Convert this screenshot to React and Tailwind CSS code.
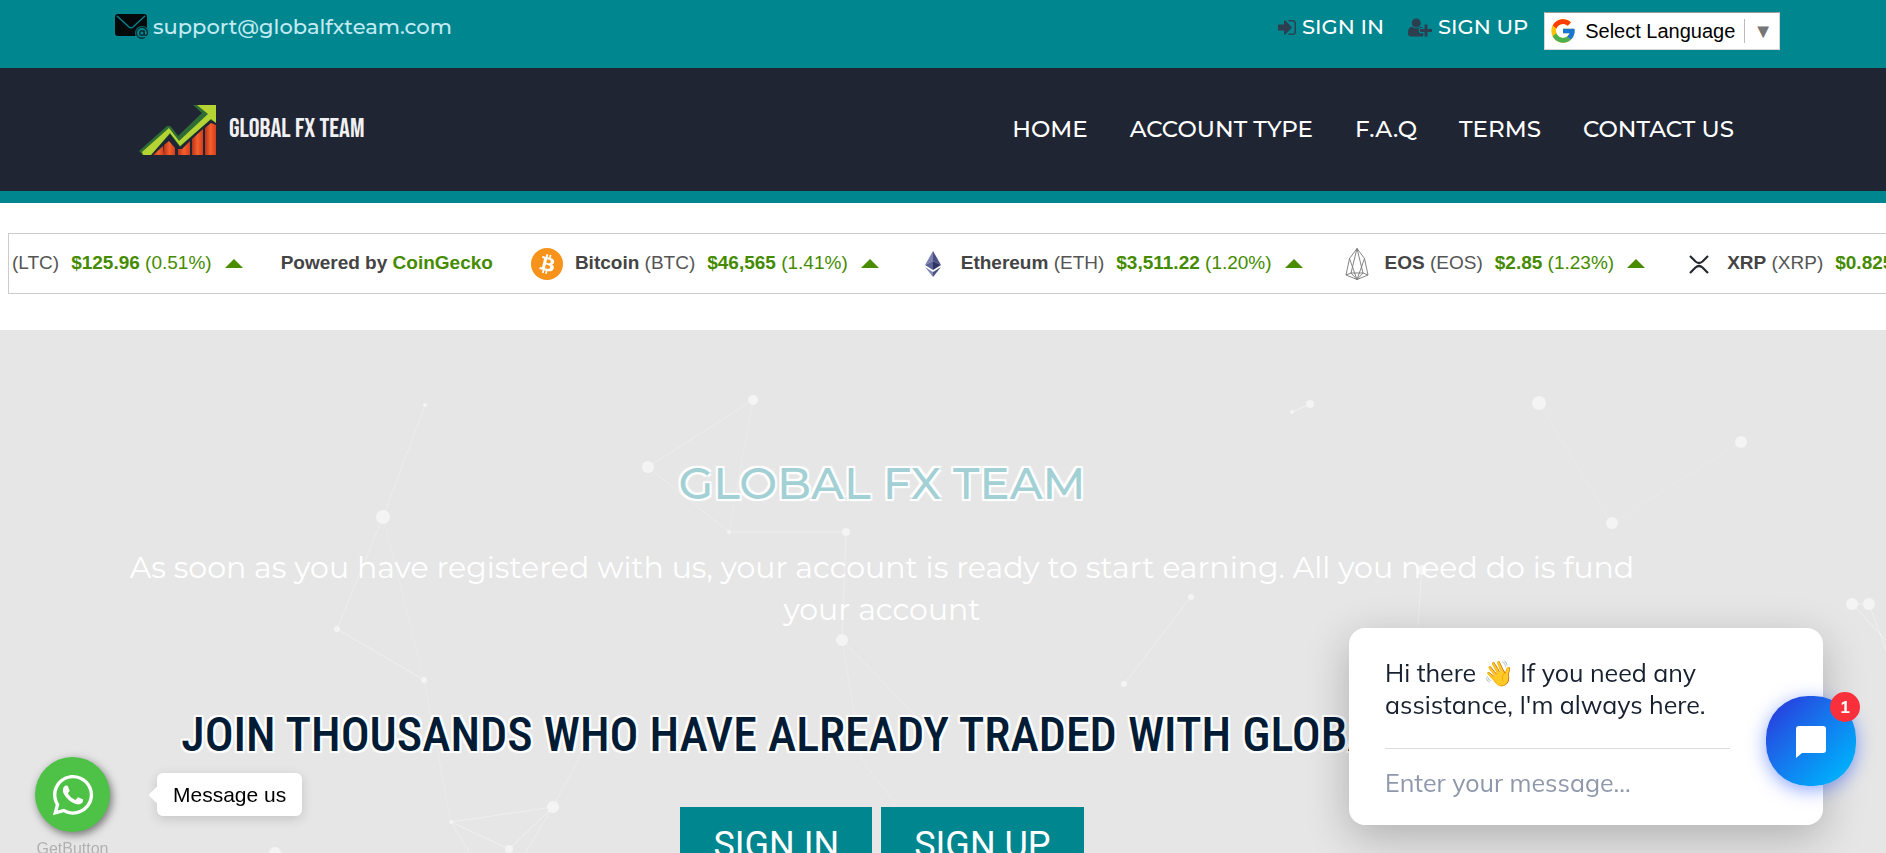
import { FaWhatsapp } from "react-icons/fa"
import { FcGoogle } from "react-icons/fc"

const NAV_LINKS = ["HOME", "ACCOUNT TYPE", "F.A.Q", "TERMS", "CONTACT US"]

const COINS = [
  { name: "Bitcoin", symbol: "BTC", price: "$46,565", change: "1.41%", Icon: BitcoinIcon },
  { name: "Ethereum", symbol: "ETH", price: "$3,511.22", change: "1.20%", Icon: EthereumIcon },
  { name: "EOS", symbol: "EOS", price: "$2.85", change: "1.23%", Icon: EosIcon },
  { name: "XRP", symbol: "XRP", price: "$0.825", change: "0.64%", Icon: XrpIcon },
]

// [x, y, radius]
const DOTS = [
  [425, 75, 2], [383, 187, 7], [337, 299, 3], [424, 350, 3], [451, 492, 2], [553, 477, 6],
  [509, 519, 4], [275, 523, 6], [648, 137, 6], [753, 70, 5], [729, 202, 2], [846, 202, 4],
  [842, 310, 6], [1310, 74, 4], [1292, 82, 2], [1539, 73, 7], [1741, 112, 6], [1612, 193, 6],
  [1191, 267, 3], [1124, 354, 3], [1422, 240, 5], [1852, 274, 6], [1869, 274, 6],
]

// [x1, y1, x2, y2, opacity]
const LINES = [
  [425, 75, 383, 187, 0.25], [383, 187, 337, 299, 0.25], [337, 299, 424, 350, 0.35], [383, 187, 424, 350, 0.1],
  [424, 350, 451, 492, 0.2], [451, 492, 553, 477, 0.35], [451, 492, 509, 519, 0.4], [553, 477, 509, 519, 0.4],
  [553, 477, 594, 400, 0.25], [451, 492, 480, 540, 0.3], [553, 477, 515, 540, 0.3], [648, 137, 753, 70, 0.25],
  [648, 137, 729, 202, 0.25], [753, 70, 729, 202, 0.2], [729, 202, 846, 202, 0.35], [846, 202, 842, 310, 0.3],
  [842, 310, 862, 430, 0.2], [862, 430, 900, 480, 0.2], [842, 310, 930, 400, 0.25], [1310, 74, 1292, 82, 0.5],
  [1539, 73, 1612, 193, 0.15], [1741, 112, 1612, 193, 0.15], [1191, 267, 1124, 354, 0.3], [1422, 240, 1416, 320, 0.3],
  [1852, 274, 1869, 274, 0.5], [1852, 274, 1900, 325, 0.4], [1869, 274, 1888, 325, 0.4],
]

function MailIcon() {
  return (
    <svg viewBox="0 0 34 26" className="w-[34px] h-[26px]" aria-hidden="true">
      <rect x="0" y="0" width="32" height="22" rx="3" fill="#05090c" />
      <path d="M2 2 14 13q2 1.500 4 0L30 2" fill="none" stroke="#00868f" strokeWidth="1.400" />
      <circle cx="27" cy="19" r="7" fill="#00868f" />
      <circle cx="27" cy="19" r="2.300" fill="none" stroke="#062c33" strokeWidth="1.400" />
      <path d="M29.300 16.500v3.500q.3 1.800 1.900 1.400 1.300-.6 1.200-2.900a5.500 5.500 0 1 0-2.400 4.800" fill="none" stroke="#062c33" strokeWidth="1.300" />
    </svg>
  )
}

function SignInIcon() {
  return (
    <svg viewBox="0 0 1536 1792" className="w-[18px] h-[21px] fill-[#2d3e50]" aria-hidden="true">
      <path d="M1184 896q0 26-19 45l-544 544q-19 19-45 19t-45-19-19-45v-288H64q-26 0-45-19T0 1088V704q0-26 19-45t45-19h448V352q0-26 19-45t45-19 45 19l544 544q19 19 19 45zm352-352v704q0 119-84.500 203.500T1248 1536H928q-13 0-22.500-9.500T896 1504q0-4-1-20t-.5-26.500 3-23.500 10-19.500 20.500-6.500h320q66 0 113-47t47-113V544q0-66-47-113t-113-47H936l-11.500-1-11.500-3-8-5.500-7-9-2-13.500q0-4-1-20t-.5-26.500 3-23.500 10-19.500 20.500-6.500h320q119 0 203.500 84.500T1536 544z" />
    </svg>
  )
}

function SignUpIcon() {
  return (
    <svg viewBox="0 0 2048 1792" className="w-6 h-[21px] fill-[#2d3e50]" aria-hidden="true">
      <path d="M704 896q-159 0-271.500-112.500T320 512t112.500-271.500T704 128t271.500 112.500T1088 512 975.500 783.500 704 896zm960 128h352q13 0 22.500 9.500t9.500 22.500v192q0 13-9.500 22.500t-22.500 9.500h-352v352q0 13-9.500 22.500t-22.500 9.500h-192q-13 0-22.500-9.500t-9.500-22.500v-352h-352q-13 0-22.500-9.500t-9.500-22.500v-192q0-13 9.500-22.500t22.500-9.500h352V672q0-13 9.500-22.500t22.500-9.500h192q13 0 22.500 9.500t9.500 22.500v352zm-736 224q0 52 38 90t90 38h256v238q-68 50-171 50H267q-121 0-194-69T0 1405q0-53 3.500-103.500t14-109T44 1084t43-97.500 62-81 85.500-53.500T346 832q19 0 39 17 79 61 154.500 91.500T704 971t164.500-30.500T1023 849q20-17 39-17 132 0 217 96h-223q-52 0-90 38t-38 90v192z" />
    </svg>
  )
}

function LogoMark() {
  return (
    <svg viewBox="0 0 78 50" className="w-[78px] h-[50px]" aria-hidden="true">
      <defs>
        <linearGradient id="bar" x1="0" x2="1">
          <stop offset="0" stopColor="#b8341c" />
          <stop offset="0.500" stopColor="#f4602b" />
          <stop offset="1" stopColor="#d63c1c" />
        </linearGradient>
      </defs>
      <path d="M14 50 24 41l1 9z" fill="url(#bar)" />
      <path d="M25 40l5-4 6 7v7H25z" fill="url(#bar)" />
      <path d="M39 44l4 0 8-8v14H39z" fill="url(#bar)" />
      <path d="M53 34 64 24v26H53z" fill="url(#bar)" />
      <path d="M66 23 72 18l5 2v30H66z" fill="url(#bar)" />
      <path d="M0 46 28 21q3-1 5 2l6 8L63 8l-9-8h23v17l-6-2-30 27-10-13L12 50H4z" fill="#2f6b34" />
      <path d="M4 50 3 47 30 23l10 13L69 9l-11-9h19v18l-5-4-31 27-10-13L12 50z" fill="#b5d433" />
    </svg>
  )
}

function BitcoinIcon() {
  return (
    <svg viewBox="0 0 32 32" className="size-8" aria-hidden="true">
      <circle cx="16" cy="16" r="16" fill="#f7931a" />
      <path
        fill="#fff"
        d="M23.189 14.020c.314-2.096-1.283-3.223-3.465-3.975l.708-2.840-1.728-.43-.69 2.765c-.454-.114-.92-.22-1.385-.326l.695-2.783L15.596 6l-.708 2.839c-.376-.086-.746-.17-1.104-.26l.002-.009-2.384-.595-.46 1.846s1.283.294 1.256.312c.7.175.826.638.805 1.006l-.806 3.235c.048.012.11.030.18.057l-.183-.045-1.130 4.532c-.086.212-.303.531-.793.410.018.025-1.256-.313-1.256-.313l-.858 1.978 2.250.561c.418.105.828.215 1.231.318l-.715 2.872 1.727.43.708-2.840c.472.127.930.245 1.378.357l-.706 2.828 1.728.43.715-2.866c2.948.558 5.164.333 6.097-2.333.752-2.146-.037-3.385-1.588-4.192 1.130-.26 1.980-1.003 2.207-2.538zm-3.950 5.538c-.533 2.147-4.148.986-5.320.695l.950-3.805c1.172.293 4.929.872 4.370 3.110zm.535-5.569c-.487 1.953-3.495.960-4.470.717l.860-3.450c.975.243 4.118.696 3.610 2.733z"
      />
    </svg>
  )
}

function EthereumIcon() {
  return (
    <svg viewBox="0 0 32 32" className="size-8" aria-hidden="true">
      <path d="M16 3 8 17l8-4z" fill="#7b82b0" />
      <path d="M16 3v10l8 4z" fill="#4a5082" />
      <path d="M8 17l8-4v9z" fill="#5b6195" />
      <path d="M24 17l-8-4v9z" fill="#2e3464" />
      <path d="M8 19l8 10v-5z" fill="#8289b5" />
      <path d="M24 19l-8 10v-5z" fill="#4a5082" />
    </svg>
  )
}

function EosIcon() {
  return (
    <svg viewBox="0 0 32 32" className="size-8" fill="none" stroke="#777" strokeWidth="0.900" strokeLinejoin="round" aria-hidden="true">
      <path d="M16 0.500 8.500 10.500 5 27l11 4.500L27 27l-3.500-16.500z" />
      <path d="M16 0.500 10 25h12zM8.500 10.500 16 31.500 23.500 10.500M5 27l5-2 6 6.500 6-6.500 5 2" />
    </svg>
  )
}

function XrpIcon() {
  return (
    <svg viewBox="0 0 32 32" className="size-8" fill="none" stroke="#23292f" strokeWidth="2.200" aria-hidden="true">
      <path d="M7 8l5.500 5.500q3.500 3 7 0L25 8M7 25l5.500-5.500q3.500-3 7 0L25 25" />
    </svg>
  )
}

function UpArrow() {
  return (
    <svg viewBox="0 0 18 9" className="w-[18px] h-[9px]" aria-hidden="true">
      <path d="M9 0l9 9H0z" fill="#4a8c00" />
    </svg>
  )
}

function Quote({ price, change }) {
  return (
    <>
      <span className="ml-3 text-[#458b00]">
        <b>{price}</b> ({change})
      </span>
      <span className="ml-[13px] mr-[38px]">
        <UpArrow />
      </span>
    </>
  )
}

function TopBar() {
  return (
    <div className="bg-[#00868f] h-[68px] pl-[115px] pr-[106px] pt-3 flex justify-between items-start">
      <a href="#mail" className="flex items-center gap-1 text-[21px] leading-[30px] font-medium text-[#c3eaf3]">
        <MailIcon />
        support@globalfxteam.com
      </a>
      <div className="flex items-start">
        <a href="#signin" className="flex items-center gap-1.5 mr-6 text-[21px] leading-[30px] font-medium text-white">
          <SignInIcon />
          SIGN IN
        </a>
        <a href="#signup" className="flex items-center gap-1.5 mr-4 text-[21px] leading-[30px] font-medium text-white">
          <SignUpIcon />
          SIGN UP
        </a>
        <label className="flex items-center h-[38px] px-1 bg-white border border-[#d5d5d5] border-t-[#9b9b9b] font-['Liberation_Sans',sans-serif] text-xl text-black">
          <FcGoogle className="size-7 mr-2" />
          <select aria-label="Select Language" className="appearance-none bg-transparent outline-none">
            <option>Select Language</option>
          </select>
          <span className="ml-2 pl-2 pr-0.5 border-l border-[#bbb] text-[#767676] text-xl leading-6">▼</span>
        </label>
      </div>
    </div>
  )
}

function Header() {
  return (
    <header className="bg-[#202534] border-b-[12px] border-[#00868f] pl-[139px] pr-[152px] h-[135px] flex items-center justify-between">
      <a href="#home" className="flex items-center gap-3 text-[#f1f1f4] font-['Bebas_Neue','Liberation_Sans_Narrow','Roboto_Condensed',sans-serif] text-[27px]">
        <LogoMark />
        GLOBAL FX TEAM
      </a>
      <nav className="flex gap-[42px]">
        {NAV_LINKS.map((label) => (
          <a key={label} href="#nav" className="text-[23px] font-medium text-white">
            {label}
          </a>
        ))}
      </nav>
    </header>
  )
}

function Ticker() {
  return (
    <div className="bg-white pt-[30px] pb-9 pl-2">
      <div className="h-[61px] border border-r-0 border-[#ccc] pl-[3px] flex items-center overflow-hidden whitespace-nowrap font-['Liberation_Sans',sans-serif] text-[19px] text-[#555]">
        <span>(LTC)</span>
        <Quote price="$125.96" change="0.51%" />
        <b className="mr-[38px] text-[#444]">
          Powered by{" "}
          <a href="#coingecko" className="text-[#458b00]">
            CoinGecko
          </a>
        </b>
        {COINS.map(({ name, symbol, price, change, Icon }) => (
          <div key={symbol} className="flex items-center shrink-0">
            <Icon />
            <span className="ml-3">
              <b className="text-[#444]">{name}</b> ({symbol})
            </span>
            <Quote price={price} change={change} />
          </div>
        ))}
      </div>
    </div>
  )
}

function Particles() {
  return (
    <svg className="absolute inset-0 w-full h-full" aria-hidden="true">
      {LINES.map(([x1, y1, x2, y2, opacity], i) => (
        <line key={i} x1={x1} y1={y1} x2={x2} y2={y2} stroke="#fff" strokeOpacity={opacity} />
      ))}
      {DOTS.map(([cx, cy, r], i) => (
        <circle key={i} cx={cx} cy={cy} r={r} fill="#f4f4f4" />
      ))}
    </svg>
  )
}

function Hero() {
  return (
    <section className="relative bg-[#e6e6e6] overflow-hidden">
      <Particles />
      <div className="relative pl-28 pr-[234px] pt-[119px] pb-24 flex flex-col items-center text-center">
        <h1 className="text-[45px] leading-[68px] font-medium text-[#a3d0d4] [text-shadow:-2px_-2px_1px_#fff,2px_-2px_1px_#fff,-2px_2px_1px_#fff,2px_2px_1px_#fff]">
          GLOBAL FX TEAM
        </h1>
        <p className="mt-[30px] text-[30px] leading-[42px] text-white">
          As soon as you have registered with us, your account is ready to start earning. All you need do is fund your
          account
        </p>
        <h2 className="mt-[70px] whitespace-nowrap font-['Roboto_Condensed','Liberation_Sans_Narrow',sans-serif] text-5xl leading-[68px] font-medium text-[#021c36] [text-shadow:-2px_-2px_1px_#fff,2px_-2px_1px_#fff,-2px_2px_1px_#fff,2px_2px_1px_#fff]">
          JOIN THOUSANDS WHO HAVE ALREADY TRADED WITH GLOBAL FX TEAM
        </h2>
        <div className="mt-[38px] flex gap-[9px] font-['Roboto',sans-serif] text-4xl text-white">
          <a href="#signin" className="bg-[#00868f] px-[33px] py-[18px]">
            SIGN IN
          </a>
          <a href="#signup" className="bg-[#00868f] px-[33px] py-[18px]">
            SIGN UP
          </a>
        </div>
      </div>
    </section>
  )
}

function WhatsAppWidget() {
  return (
    <div className="fixed left-[35px] top-[757px] flex items-start gap-[47px] font-['Liberation_Sans',sans-serif]">
      <div className="flex flex-col items-center">
        <button
          type="button"
          aria-label="WhatsApp"
          className="size-[75px] rounded-full bg-[#4dc247] shadow-[2px_3px_8px_rgba(0,0,0,0.5)] flex items-center justify-center"
        >
          <FaWhatsapp className="size-[46px] text-white" />
        </button>
        <a href="#getbutton" className="mt-[5px] text-base text-[#b1b1b1]">
          GetButton
        </a>
      </div>
      <div className="relative mt-4 h-[43px] px-4 flex items-center rounded-md bg-white text-[21px] text-black shadow-[0_3px_12px_rgba(0,0,0,0.15)]">
        <span className="absolute -left-1.5 size-3 rotate-45 bg-white"></span>
        Message us
      </div>
    </div>
  )
}

function ChatWidget() {
  return (
    <div className="fixed right-[63px] top-[628px] w-[474px] h-[197px] rounded-2xl bg-white px-9 pt-[29px] font-['Mulish','Muli','Lato',sans-serif] shadow-[0_12px_44px_rgba(0,0,0,0.24)]">
      <p className="text-[25px] leading-8 text-[#17202f]">
        Hi there 👋 If you need any
        <br />
        assistance, I'm always here.
      </p>
      <div className="mt-[27px] w-[345px] border-t border-[#d9dce1]">
        <input
          type="text"
          aria-label="Enter your message"
          placeholder="Enter your message..."
          className="mt-4 w-full text-[25px] leading-9 outline-none placeholder:text-[#8f98ab]"
        />
      </div>
      <button
        type="button"
        aria-label="Open chat"
        className="absolute -right-[33px] top-[68px] size-[90px] rounded-[42px] bg-linear-135 from-[#2a27da] to-[#00c0ff] shadow-[0_4px_18px_rgba(30,80,255,0.5)] flex items-center justify-center"
      >
        <svg viewBox="0 0 30 34" className="w-[30px] h-[34px]" aria-hidden="true">
          <path d="M3 2h24q3 0 3 3v21q0 3-3 3H6l-6 5V5q0-3 3-3z" fill="#fff" />
        </svg>
        <span className="absolute -top-1 -right-1 size-[30px] rounded-full bg-[#f9303c] text-white text-lg leading-[30px] font-bold">
          1
        </span>
      </button>
    </div>
  )
}

export default function App() {
  return (
    <div className="h-screen overflow-y-auto [scrollbar-width:none] font-['Montserrat','Inter',sans-serif]">
      <TopBar />
      <Header />
      <Ticker />
      <Hero />
      <WhatsAppWidget />
      <ChatWidget />
    </div>
  )
}
